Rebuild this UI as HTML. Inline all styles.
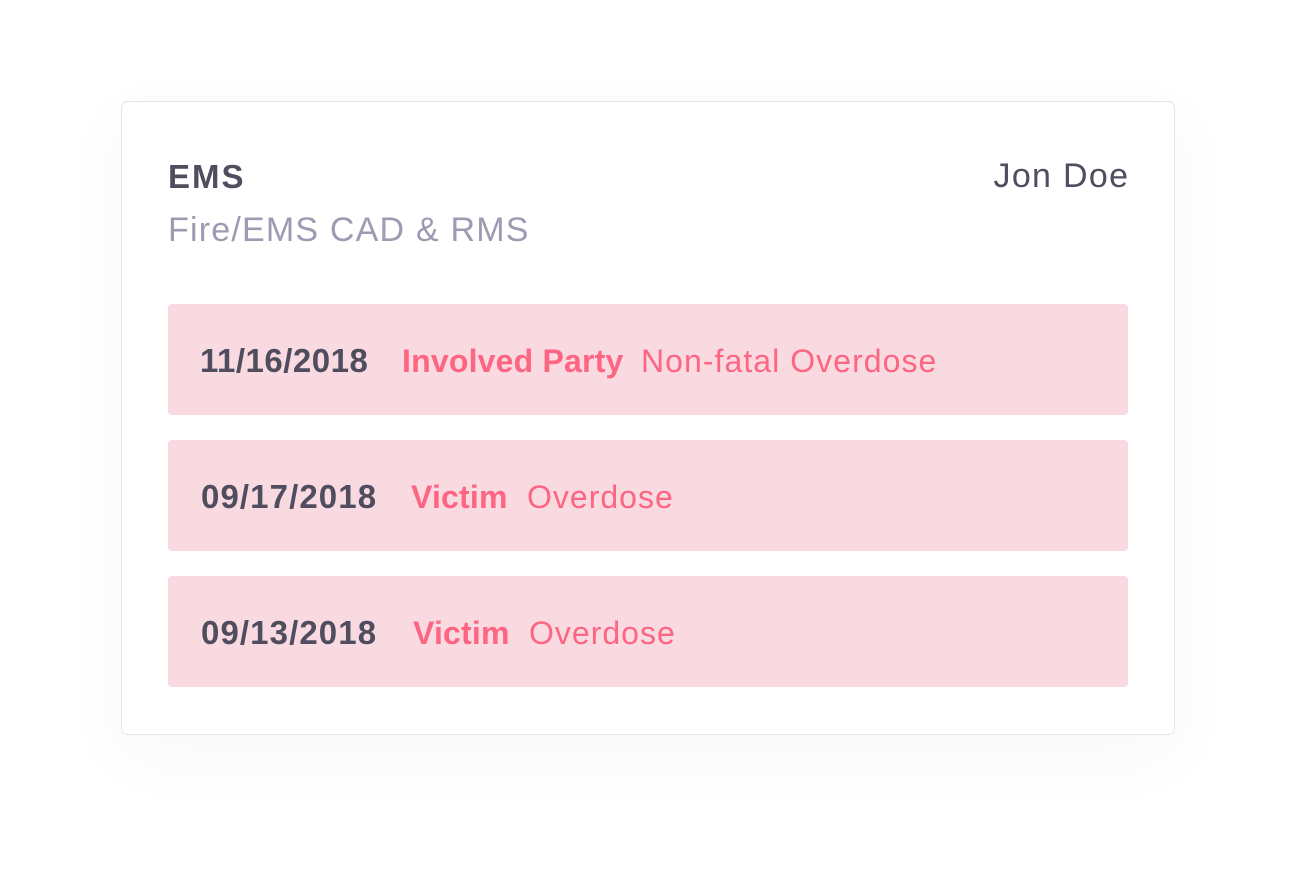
<!DOCTYPE html>
<html><head><meta charset="utf-8"><style>
html,body{margin:0;padding:0;background:#fff;width:1296px;height:876px;overflow:hidden;font-family:"Liberation Sans",sans-serif;}
.card{position:absolute;left:121px;top:101px;width:1052px;height:632px;border:1px solid #e4e2ee;border-radius:7px;background:#fff;box-shadow:0 20px 70px rgba(40,40,80,0.04);}
.row{position:absolute;left:168px;width:960px;height:111px;background:#f9dae0;border-radius:4px;}
.t{position:absolute;line-height:1;white-space:nowrap;}
.d{font-weight:bold;color:#4f4d5e;font-size:33px;letter-spacing:0.5px;}
.d2{letter-spacing:1.1px;}
.b{font-weight:bold;color:#fd6582;font-size:32px;letter-spacing:0.2px;}
.r{color:#fd6582;font-size:32px;letter-spacing:1px;}
</style></head><body>
<div class="card"></div>
<div class="t" style="left:168px;top:160px;font-size:33px;font-weight:bold;color:#4f4d5e;letter-spacing:2px;">EMS</div>
<div class="t" style="top:159px;font-size:34px;color:#4f4d5e;width:160px;text-align:right;left:968px;letter-spacing:1.3px;">Jon Do<span style="letter-spacing:0">e</span></div>
<div class="t" style="left:168px;top:213px;font-size:34px;color:#9d9bb2;letter-spacing:1.2px;">Fire/EMS CAD &amp; RMS</div>

<div class="row" style="top:304px"></div>
<div class="t d" style="left:200px;top:344px">11/16/2018</div>
<div class="t b" style="left:402px;top:345px">Involved Party</div>
<div class="t r" style="left:641px;top:345px;letter-spacing:1.05px">Non-fatal Overdose</div>

<div class="row" style="top:440px"></div>
<div class="t d d2" style="left:201px;top:480px">09/17/2018</div>
<div class="t b" style="left:411px;top:481px">Victim</div>
<div class="t r" style="left:527px;top:481px">Overdose</div>

<div class="row" style="top:576px"></div>
<div class="t d d2" style="left:201px;top:616px">09/13/2018</div>
<div class="t b" style="left:413px;top:617px">Victim</div>
<div class="t r" style="left:529px;top:617px">Overdose</div>
</body></html>
